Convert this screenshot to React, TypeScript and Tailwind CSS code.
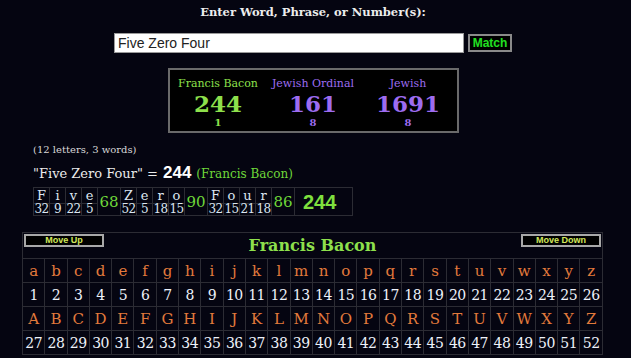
import React from "react";

const serif = "font-['DejaVu_Serif','Liberation_Serif',serif]";
const sans = "font-['Liberation_Sans',Arial,sans-serif]";

type Word = { letters: string[]; values: number[]; sum: number };

const words: Word[] = [
  { letters: ["F", "i", "v", "e"], values: [32, 9, 22, 5], sum: 68 },
  { letters: ["Z", "e", "r", "o"], values: [52, 5, 18, 15], sum: 90 },
  { letters: ["F", "o", "u", "r"], values: [32, 15, 21, 18], sum: 86 },
];

const lower = "abcdefghijklmnopqrstuvwxyz".split("");
const upper = "ABCDEFGHIJKLMNOPQRSTUVWXYZ".split("");

const ciphers = [
  { name: "Francis Bacon", value: 244, rank: 1, color: "text-[#8ee04c]" },
  { name: "Jewish Ordinal", value: 161, rank: 8, color: "text-[#9d6cf0]" },
  { name: "Jewish", value: 1691, rank: 8, color: "text-[#9d6cf0]" },
];

function NavButton({ label }: { label: string }) {
  return (
    <button
      className={`${sans} mt-[1px] h-[13px] w-[80px] border-2 border-[#a8a8a8] bg-black text-[9px] font-bold leading-none text-[#d2e85a]`}
    >
      {label}
    </button>
  );
}

export default function App() {
  return (
    <div className="h-[358px] w-full overflow-hidden bg-[#050511]">
      <div className="w-[626px]">
        {/* heading */}
        <div className={`${serif} pt-[4px] text-center text-[11.5px] font-bold leading-[16px] text-[#ececec]`}>
          Enter Word, Phrase, or Number(s):
        </div>

        {/* search */}
        <div className="mt-[13px] flex items-center justify-center gap-[4px]">
          <input
            readOnly
            value="Five Zero Four"
            className={`${sans} h-[20px] w-[350px] border border-[#9a9a9a] bg-white px-[3px] text-[14px] text-[#222] outline-none`}
          />
          <button
            className={`${sans} h-[18px] w-[44px] border-2 border-[#8a8a8a] bg-black text-[12px] font-bold leading-none text-[#22e022]`}
          >
            Match
          </button>
        </div>

        {/* cipher summary */}
        <div className="mt-[15px] flex justify-center">
          <div className="flex h-[65px] w-[291px] border-2 border-[#6a6a6a] bg-black px-[1px] pt-[7px]">
            {ciphers.map((c) => (
              <div key={c.name} className={`${serif} flex w-[95px] flex-col items-center ${c.color}`}>
                <div className="text-[11px] leading-[14px]">{c.name}</div>
                <div className="text-[23px] font-bold leading-[26px]">{c.value}</div>
                <div className="text-[10px] font-bold leading-[12px]">{c.rank}</div>
              </div>
            ))}
          </div>
        </div>

        {/* breakdown */}
        <div className="ml-[33px] mt-[10px]">
          <div className={`${serif} h-[13px] text-[10px] leading-[13px] text-[#d8d8d8]`}>(12 letters, 3 words)</div>
          <div className="mt-[9px] flex h-[16px] items-baseline gap-[5px] leading-[16px]">
            <span className={`${serif} text-[13px] text-[#ececec]`}>"Five Zero Four" =</span>
            <span className={`${sans} text-[17px] font-bold text-white`}>244</span>
            <span className={`${serif} text-[12px] text-[#6fd83a]`}>(Francis Bacon)</span>
          </div>
          <table className="mt-[6px] border-collapse">
            <tbody>
              <tr className="h-[16px]">
                {words.map((w, wi) => (
                  <React.Fragment key={wi}>
                    {w.letters.map((l, li) => (
                      <td
                        key={li}
                        className={`${serif} w-[16px] border border-[#2c2c34] p-0 text-center align-bottom text-[13px] leading-[14px] text-[#dce6f2]`}
                      >
                        {l}
                      </td>
                    ))}
                    <td
                      rowSpan={2}
                      className={`${serif} w-[23px] border border-[#2c2c34] p-0 text-center text-[15px] leading-[16px] text-[#6fd83a]`}
                    >
                      {w.sum}
                    </td>
                  </React.Fragment>
                ))}
                <td
                  rowSpan={2}
                  className={`${sans} border border-[#2c2c34] pl-[8px] pr-[16px] text-center text-[20px] font-bold leading-[20px] text-[#7fe03e]`}
                >
                  244
                </td>
              </tr>
              <tr className="h-[12px]">
                {words.map((w, wi) => (
                  <React.Fragment key={wi}>
                    {w.values.map((v, vi) => (
                      <td
                        key={vi}
                        className={`${serif} border border-[#2c2c34] p-0 text-center text-[12px] leading-[11px] tracking-[-0.6px] text-[#dce6f2]`}
                      >
                        {v}
                      </td>
                    ))}
                  </React.Fragment>
                ))}
              </tr>
            </tbody>
          </table>
        </div>

        {/* cipher chart */}
        <table className="ml-[22px] mt-[16px] w-[581px] table-fixed border-collapse">
          <tbody>
            <tr className="h-[26px]">
              <td colSpan={26} className="border border-[#2c2c34] p-0 align-top">
                <div className="flex h-[25px] items-start justify-between px-[1px]">
                  <NavButton label="Move Up" />
                  <span className={`${serif} mt-[3px] text-[16px] font-bold leading-[20px] text-[#8ee04c]`}>
                    Francis Bacon
                  </span>
                  <NavButton label="Move Down" />
                </div>
              </td>
            </tr>
            {[lower, upper].map((row, ri) => (
              <React.Fragment key={ri}>
                <tr className="h-[24px]">
                  {row.map((l) => (
                    <td
                      key={l}
                      className={`${serif} border border-[#2c2c34] p-0 text-center text-[15px] leading-[22px] text-[#e27a3c]`}
                    >
                      {l}
                    </td>
                  ))}
                </tr>
                <tr className="h-[24px]">
                  {row.map((l, i) => (
                    <td
                      key={l}
                      className={`${serif} border border-[#2c2c34] p-0 text-center text-[14px] leading-[22px] tracking-[-0.5px] text-[#eef2fa]`}
                    >
                      {ri * 26 + i + 1}
                    </td>
                  ))}
                </tr>
              </React.Fragment>
            ))}
          </tbody>
        </table>
      </div>
    </div>
  );
}
